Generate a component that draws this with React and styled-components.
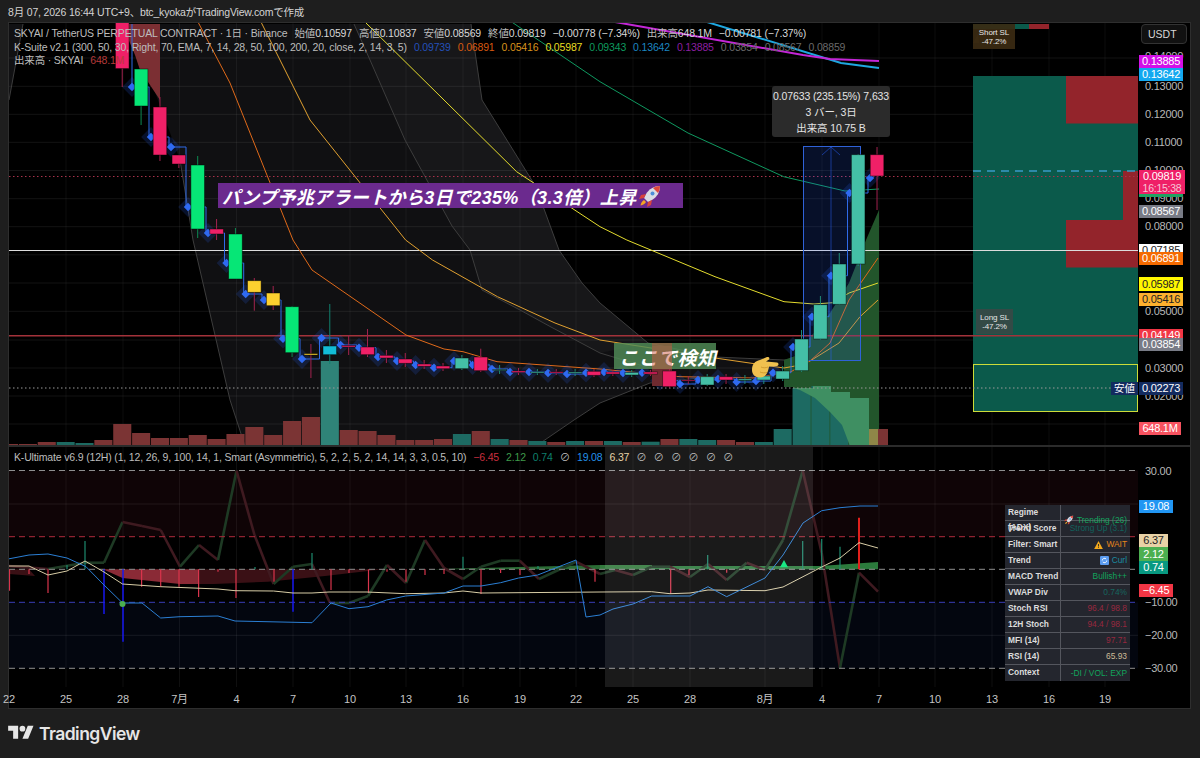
import React from 'react';
import styled, { createGlobalStyle } from 'styled-components';

const FONT = `"Liberation Sans", "Noto Sans CJK JP", sans-serif`;

const GlobalStyle = createGlobalStyle`
  html, body {
    margin: 0;
    padding: 0;
    background: #1e1e1e;
  }
  body {
    font-family: ${FONT};
  }
`;

const Page = styled.div`
  width: 1200px;
  height: 758px;
  overflow: hidden;
  background: #1e1e1e;
  display: flex;
  flex-direction: column;
`;

const Caption = styled.div`
  height: 22px;
  padding-left: 8px;
  display: flex;
  align-items: center;
  color: #d4d4d4;
  font-size: 10.5px;
  letter-spacing: -0.18px;
  white-space: nowrap;
`;

const ChartFrame = styled.div`
  width: 1181px;
  margin-left: 8px;
  border: 1px solid #2e2e2e;
  background: #000;
  display: flex;
  flex-direction: column;
`;

const PaneRow = styled.div`
  display: grid;
  grid-template-columns: 1129px 52px;
  height: ${(p) => p.$h}px;
`;

const Plot = styled.div`
  position: relative;
  overflow: hidden;
  svg {
    display: block;
  }
`;

const PaneDivider = styled.div`
  height: 2px;
  background: #2b2b2b;
`;

const Legend = styled.div`
  position: absolute;
  left: 5px;
  top: ${(p) => p.$top}px;
  display: flex;
  flex-direction: column;
  gap: 2.5px;
  font-size: 10.5px;
  letter-spacing: -0.16px;
  line-height: 11px;
  color: #bdbdbd;
  white-space: nowrap;
`;

const LegendLine = styled.div`
  display: flex;
  gap: ${(p) => p.$gap || 7}px;
`;

const Val = styled.span`
  color: ${(p) => p.$c || '#d8d8d8'};
`;

const Callout = styled.div`
  position: absolute;
  left: ${(p) => p.$x}px;
  top: ${(p) => p.$y}px;
  width: ${(p) => p.$w}px;
  height: ${(p) => p.$h}px;
  background: ${(p) => p.$bg};
  color: #fff;
  font-style: italic;
  font-weight: 700;
  font-size: ${(p) => p.$size}px;
  letter-spacing: ${(p) => p.$ls}px;
  display: flex;
  align-items: center;
  padding-left: ${(p) => p.$pad}px;
  box-sizing: border-box;
  white-space: nowrap;
  svg {
    flex: none;
    margin-left: 1px;
  }
`;

const CalloutTint = styled.div`
  position: absolute;
  left: 643px;
  top: 320px;
  width: 20px;
  height: 26px;
  background: rgba(205, 80, 60, 0.45);
`;

const MeasureTip = styled.div`
  position: absolute;
  left: 763px;
  top: 63px;
  width: 118px;
  height: 51px;
  background: #2b2b2b;
  border-radius: 3px;
  color: #e4e4e4;
  font-size: 10.5px;
  letter-spacing: -0.1px;
  display: flex;
  flex-direction: column;
  align-items: center;
  justify-content: center;
  line-height: 16px;
`;

const ToolTag = styled.div`
  position: absolute;
  left: ${(p) => p.$x}px;
  top: ${(p) => p.$y}px;
  width: ${(p) => p.$w}px;
  height: 25px;
  background: ${(p) => p.$bg};
  color: #e6e6e6;
  font-size: 8px;
  line-height: 9px;
  letter-spacing: -0.1px;
  display: flex;
  flex-direction: column;
  align-items: center;
  justify-content: center;
`;

const LowFlag = styled.div`
  position: absolute;
  right: 0;
  top: 359px;
  width: 27px;
  height: 13px;
  background: #132b5f;
  color: #fff;
  font-size: 10.5px;
  line-height: 13px;
  text-align: center;
`;

const Axis = styled.div`
  position: relative;
  background: #000;
  overflow: hidden;
`;

const AxisText = styled.span`
  position: absolute;
  left: ${(p) => p.$x || 7}px;
  top: ${(p) => p.$y - 7}px;
  line-height: 14px;
  font-size: 11px;
  letter-spacing: -0.25px;
  color: #b8b8b8;
`;

const PriceTag = styled.span`
  position: absolute;
  left: 1px;
  top: ${(p) => p.$y}px;
  width: ${(p) => p.$w || 44}px;
  height: ${(p) => p.$h || 13}px;
  background: ${(p) => p.$bg};
  color: ${(p) => p.$fg || '#fff'};
  font-size: 11px;
  letter-spacing: -0.25px;
  line-height: ${(p) => p.$h || 13}px;
  text-align: center;
  white-space: nowrap;
`;

const TwoLineTag = styled(PriceTag)`
  height: 24px;
  line-height: 12px;
  width: 46px;
  small {
    display: block;
    font-size: 10.5px;
    color: #f6c6d6;
  }
`;

const UnitButton = styled.div`
  position: absolute;
  left: 3px;
  top: 1px;
  width: 46px;
  height: 20px;
  background: #111;
  border: 1px solid #333;
  border-radius: 4px;
  box-sizing: border-box;
  color: #d8d8d8;
  font-size: 10.5px;
  line-height: 18px;
  padding-left: 6px;
`;

const StatTable = styled.div`
  position: absolute;
  left: 996px;
  top: 58px;
  width: 125px;
  background: #24262e;
  display: flex;
  flex-direction: column;
`;

const StatRow = styled.div`
  display: grid;
  grid-template-columns: 56px 1fr;
  height: 16px;
  box-sizing: border-box;
  border-bottom: 1px solid #54565e;
  font-size: 8.4px;
  line-height: 15px;
  &:last-child {
    border-bottom: 0;
  }
`;

const StatLabel = styled.div`
  color: #dcdcdc;
  font-weight: 700;
  padding-left: 3px;
  border-right: 1px solid #54565e;
`;

const StatValue = styled.div`
  color: ${(p) => p.$c};
  display: flex;
  align-items: center;
  justify-content: flex-end;
  gap: 3px;
  padding-right: 3px;
`;

const TimeRow = styled.div`
  position: relative;
  height: 21px;
  background: #000;
`;

const TimeLabel = styled.span`
  position: absolute;
  left: ${(p) => p.$x - 9}px;
  top: 5px;
  transform: translateX(-50%);
  font-size: 11px;
  letter-spacing: -0.2px;
  line-height: 14px;
  color: #c4c4c4;
`;

const Footer = styled.div`
  flex: 1;
  padding: 14px 0 0 8px;
  display: flex;
  align-items: flex-start;
  gap: 5px;
`;

const Brand = styled.span`
  font-family: "Inter", sans-serif;
  font-weight: 600;
  font-size: 17.5px;
  line-height: 22px;
  letter-spacing: -0.55px;
  color: #e6e6e6;
`;

const BAR = 18.87;
const X = (i) => 9 + BAR * i;
const VERTICALS = [66, 123, 179.5, 236.5, 293, 350, 406, 463, 520, 576, 633, 690, 765, 822, 879, 935, 992, 1049, 1105];
const MAIN_LEVELS = [58, 86.3, 114.3, 142.3, 170.5, 198.7, 226.7, 254.8, 283, 311.3, 340, 368, 396, 424];
const SUB_LEVELS = [504, 635.3];

const PINK = '#ef2067';
const LIME = '#06e676';
const TEAL = '#44bfa6';
const GOLD = '#fcd12f';
const AQUA = '#12bcd6';

// [bar, top, bottom, wickTop, wickBottom, colour]
const CANDLES = [
  [6, 10, 68.6, 10, 87, PINK],
  [7, 69, 106, 69, 125, LIME],
  [8, 107, 155, 97, 161, PINK],
  [9, 155, 164, 155, 168, PINK],
  [10, 165, 229, 156, 238, LIME],
  [11, 229, 234, 219, 240, PINK],
  [12, 234, 279, 228, 279, LIME],
  [13, 280.7, 292.3, 278, 310.7, GOLD],
  [14, 293, 305.7, 286, 310, GOLD],
  [15, 306.7, 352.7, 306, 357, LIME],
  [16, 353.6, 355, 344, 378, GOLD],
  [17, 346, 354.7, 304, 364, AQUA],
  [18, 345.5, 347, 335, 355, PINK],
  [19, 347, 354.7, 329, 357, PINK],
  [20, 355.3, 358, 350, 363, PINK],
  [21, 359, 363.3, 353, 367, PINK],
  [22, 364, 366.3, 360, 369, PINK],
  [23, 366, 368.7, 363, 371, PINK],
  [24, 358, 368.7, 355, 370, TEAL],
  [25, 357, 370.7, 348.7, 372, PINK],
  [26, 369.5, 370.5, 365, 374, TEAL],
  [27, 371, 372.5, 368, 375, PINK],
  [28, 371.8, 373, 369, 375, TEAL],
  [29, 371.8, 373, 369, 375, PINK],
  [30, 372, 373.2, 369, 376, TEAL],
  [31, 371.3, 375.3, 369, 377, PINK],
  [32, 372, 374, 370, 376, PINK],
  [33, 372.5, 375, 370, 377, TEAL],
  [34, 372, 374, 370, 376, PINK],
  [35, 371, 386.7, 369, 388, PINK],
  [36, 380, 381, 376, 384, PINK],
  [37, 376.7, 385, 374, 386, TEAL],
  [38, 376.7, 380, 374, 384, PINK],
  [39, 379, 380.5, 375, 384, TEAL],
  [40, 376, 380, 372, 384, TEAL],
  [41, 371, 379, 366, 381, TEAL],
  [42, 339, 370.7, 330, 372, TEAL],
  [43, 304.7, 339, 296, 340, TEAL],
  [44, 264, 304.3, 253, 305, TEAL],
  [45, 154.7, 264, 154, 266, TEAL],
  [46, 154.7, 176, 147, 210, PINK],
];

const DIAMONDS = [
  [132, 87], [151, 137], [171, 147], [188, 207], [208, 233], [226.5, 263], [245.7, 294], [264, 300],
  [283, 338.7], [302, 359], [321.5, 338], [340.6, 345], [359, 347.7], [378, 357], [397, 361], [415.6, 365],
  [434, 367.7], [454, 361], [472.6, 365], [492, 369], [510, 372], [529, 372], [548, 373], [567, 374],
  [586, 372.7], [604, 372], [623, 373], [642, 372.7], [660, 380.7], [680, 384], [698, 380], [718, 379],
  [736.6, 382], [756, 381], [773, 372.7], [793, 347], [812, 316.7], [831, 275.7], [849.5, 193], [870, 178],
];

const steps = DIAMONDS.reduce((acc, [x, y], n) => {
  if (n === 0) return `M132 24V${y}`;
  const prevX = DIAMONDS[n - 1][0];
  return `${acc}H${x - 2}V${y}H${x}`.replace(`H${prevX}H`, 'H');
}, '');

const R = '#7b3434';
const T = '#1d6a62';
const VOLUMES = [
  [444, R], [444, R], [442, R], [442, T], [443, T], [440, R], [424, R], [433, R], [438, R], [438, R], [435, R], [439, R],
  [434, R], [427, R], [435, R], [421, R], [417, R], [361, '#2f8378'], [430, R], [431, R], [435, R], [440, R], [440, R], [439, R],
  [434, T], [431, R], [439, T], [440, R], [441, T], [442, R], [441, T], [441, R], [441, T], [442, R], [441.7, T], [439, R],
  [439, T], [440, T], [440, R], [442, R], [442, T], [429, T], [388, T], [386, T], [392, T], [398, T], [429, R],
];

const ORANGE_MA = '198,22 230,83 293,240 312,270 406,335 444,349 463,351.7 497,361.7 600,369 680,376.7 753,378 791,371.7 810,361 830,343 849,300 878,258';
const GOLD_MA = '261,22 310,120 405.6,240 432.5,260 497.5,296.7 555,323 600,340 715,358 784,368 795,366 810.5,360.7 839,343 860,316.7 878,300';
const YELLOW_MA = '365,22 516.6,171.7 600,226.7 626.8,240 715,276.7 784,301.7 814,304 833,302.7 849,293 878,283';
const GREEN_MA = '511.7,22 600,81.7 688,133 783.7,176.7 845,191 879,189';
const BLUE_MA = '707,22 841,63 879,68';
const PURPLE_MA = '615,22 803,55 830,59 879,61';
const BAND_A = '354,24 370,60 405,140 452,226 470,250 482,290 520,310 551,327 600,353 650,368';
const BAND_B = '471,24 482,100 536,187 559,250 582,283 600,303 648,343 715,357 784,360 845,356 878,343';
const BAND_LOW = '180,160 193,240 230,400 245,446';
const BAND_LOW_R = '536,446 574,420 600,403 650,383 700,378';

const OSC = [
  [8, 566], [48, 569], [85, 562.7], [104, 562.7], [122.5, 522], [142, 526], [160.7, 530], [180, 566.7], [199, 545], [218, 560],
  [236.5, 470.7], [254.5, 535], [273.6, 584], [293, 566.7], [312, 564], [330, 603], [349, 603], [368, 596], [387, 565], [406, 583],
  [425, 540], [444, 568], [463, 579], [481, 566.7], [500.6, 560.7], [519.7, 560.7], [539, 579], [576, 561.7], [600, 574], [615, 570],
  [633, 575], [651.7, 566.7], [670, 566.7], [690, 577], [708, 564], [726.7, 580], [746.7, 562.7], [765, 570], [783, 540], [802.7, 470.7],
  [821.7, 553], [840, 668], [859, 572.7], [878, 591.7],
];

const SIGNAL_BLUE = '8,559 29,555 48,554 67,558 86,566.7 104,585 122.5,603 142,603 160.7,618 180,616.7 218,616 235,621 312,622.7 331,603 349,608.7 368,606.7 386.5,600 405.7,596 444,593 463,586 481,586 500.6,582.7 518.6,578 537.7,575 576,560 586,617 600,615 613,609 633,604 651.7,596 690,596 708,586.7 726.7,596.7 765,578 783,555 803,523 821.7,510.7 840,507.7 860,506 878,506';
const SIGNAL_TAN = '8,566 29,566 48,575 67,571 85,561 104,572 122.5,584 160.7,586.7 218,589 235,590.7 273.6,591 293,593 312,593 329,592 367,592 405.7,593.7 444,593 463,591 481,593 600,592 651.7,591.7 670,593.7 690,593 708,590 765,590.7 783,587 803,576.7 821.7,567 840,558 859,542.7 878,548';

const UP = '#1d8a6e';
const DN = '#d9344c';
const BL = '#1717f0';
// [x, bottom-or-top y, colour]
const HIST = [
  [9.5, 590.7, DN], [29, 574, DN], [48, 593, DN], [67, 565, UP], [85, 541, UP], [104, 614, BL], [123, 641.7, BL], [141.6, 586.7, DN],
  [160.7, 586.7, DN], [179, 586.7, DN], [198.6, 597, DN], [218, 571.7, DN], [236, 598, DN], [255, 567, UP], [274, 581.7, DN], [293, 611.7, BL],
  [312, 553, UP], [331, 590, DN], [349, 573, DN], [368.5, 593, DN], [387, 571.7, DN], [406, 581.7, DN], [425, 575, DN], [444, 574, DN],
  [463, 556.7, UP], [481, 594, DN], [500.6, 573, DN], [520, 575, DN], [538, 566, UP], [595, 581.7, DN], [670.7, 594, DN], [689, 575, DN],
  [707.7, 555, UP], [726.7, 572.7, DN], [802.7, 541, UP], [821.7, 539, UP], [840, 546.7, UP],
];

const STATS = [
  ['Regime (ADX)', 'Trending (26)', '#14a35f', 'rocket'],
  ['Trend Score', 'Strong Up (3.1)', '#12615c'],
  ['Filter: Smart', 'WAIT', '#e8861c', 'warn'],
  ['Trend', 'Curl', '#1b8aa0', 'cycle'],
  ['MACD Trend', 'Bullish++', '#12a35c'],
  ['VWAP Div', '0.74%', '#17655f'],
  ['Stoch RSI', '96.4 / 98.8', '#97283f'],
  ['12H Stoch', '94.4 / 98.1', '#97283f'],
  ['MFI (14)', '97.71', '#97283f'],
  ['RSI (14)', '65.93', '#cdbb98'],
  ['Context', '-DI / VOL: EXP', '#12a35c'],
];

const TIME_TICKS = [
  [9, '22'], [66, '25'], [123, '28'], [179.5, '7月'], [236.5, '4'], [293, '7'], [350, '10'], [406, '13'], [463, '16'], [520, '19'],
  [576, '22'], [633, '25'], [690, '28'], [765, '8月'], [822, '4'], [879, '7'], [935, '10'], [992, '13'], [1049, '16'], [1105, '19'],
];

const Rocket = ({ size }) => (
  <svg width={size} height={size} viewBox="0 0 24 24">
    <path d="M22 2c-6 0-11 3-14 8l-2 4 4 4 4-2c5-3 8-8 8-14z" fill="#d9dde4" />
    <path d="M22 2c-3 0-5 .8-7 2l5 5c1.200-2 2-4 2-7z" fill="#e0483e" />
    <circle cx="14.500" cy="9.500" r="2" fill="#4d8fd8" />
    <path d="M8 10l-5 1-2 4 5-1zM14 16l-1 5-4 2 1-5z" fill="#d8433c" />
    <path d="M6 16c-2 1-3 3-3.500 5.500C5 21 7 20 8 18z" fill="#f5a623" />
  </svg>
);

const WarnIcon = () => (
  <svg width="9" height="8" viewBox="0 0 12 11">
    <path d="M6 0l6 11H0z" fill="#f2a81d" />
    <path d="M5.400 4h1.200v3.500H5.400zM5.400 8.200h1.200v1.200H5.400z" fill="#222" />
  </svg>
);

const CycleIcon = () => (
  <svg width="9" height="9" viewBox="0 0 12 12">
    <rect width="12" height="12" rx="1.500" fill="#5b9cf0" />
    <path d="M3 6a3 3 0 0 1 5.200-2M9 6a3 3 0 0 1-5.200 2" fill="none" stroke="#fff" strokeWidth="1.200" />
  </svg>
);

const TvLogo = () => (
  <svg width="26" height="20" viewBox="0 0 36 28" fill="#e6e6e6">
    <path d="M14 22H7V11H0V4h14v18zM28 22h-8l7.500-18h8L28 22z" />
    <circle cx="20" cy="8" r="4" />
  </svg>
);

const MainChart = () => (
  <svg width="1129" height="422" viewBox="9 23 1129 422">
    <polygon points="9,24 23,24 9,100" fill="#111113" />
    <polygon points={`130,24 354,24 471,24 482,100 536,187 559,250 582,283 600,303 648,343 715,357 784,360 780,378 700,378 650,383 600,403 574,420 536,446 245,446 230,400 193,240 180,160`} fill="#101012" />
    <polygon points={`354,24 471,24 482,100 536,187 559,250 582,283 600,303 648,343 600,353 551,327 520,310 482,290 470,250 452,226 405,140 370,60`} fill="#171719" />
    {MAIN_LEVELS.map((y) => (
      <line key={y} x1="9" x2="1138" y1={y} y2={y} stroke="#fff" strokeOpacity="0.075" />
    ))}
    {VERTICALS.map((x) => (
      <line key={x} x1={x} x2={x} y1="23" y2="446" stroke="#fff" strokeOpacity="0.05" />
    ))}
    <polyline points="9,100 23,24" fill="none" stroke="#3d3d3d" />
    <polyline points={BAND_A} fill="none" stroke="#3d3d3d" />
    <polyline points={BAND_B} fill="none" stroke="#3d3d3d" />
    <polyline points={BAND_LOW} fill="none" stroke="#3d3d3d" />
    <polyline points={BAND_LOW_R} fill="none" stroke="#3d3d3d" />

    <polygon points="784,360 795,356 830,313 849,283 866,240 879,210 879,446 793,446 793,387 784,387" fill="#22552b" />
    <polygon points="122,24 160,24 160,100 140,70 135,55" fill="#7b2f33" />

    {VOLUMES.map(([top, color], i) => (
      <rect key={i} x={X(i) - 9} y={top} width={BAR - 0.8} height={446 - top} fill={color} />
    ))}
    <polygon points="793,388 813,388 813,386 831,386 831,392 850,392 850,398 869,398 869,429 879,429 879,446 850,446 842,425 830,412 815,398 800,390" fill="#3f8f62" />
    <rect x="869" y="429" width="9" height="17" fill="#8f8748" />
    <rect x="878" y="429" width="10" height="17" fill="#7b3434" />

    <rect x="973" y="76" width="165" height="336" fill="#0b5a4b" />
    <rect x="1066" y="76" width="72" height="47.500" fill="#93242b" />
    <rect x="1066" y="220" width="72" height="47.500" fill="#93242b" />
    <rect x="1123" y="171" width="15" height="49" fill="#93242b" />
    <rect x="973.500" y="364.500" width="164" height="47" fill="none" stroke="#cddc39" />
    <rect x="973" y="24" width="56" height="5" fill="#0b5a4b" />
    <rect x="1029" y="24" width="20" height="5" fill="#93242b" />
    <line x1="973" x2="1138" y1="171" y2="171" stroke="#3a9bc8" strokeWidth="1.500" strokeDasharray="8 6" />

    <line x1="9" x2="1138" y1="176.500" y2="176.500" stroke="#a8324a" strokeDasharray="1.500 2.500" />
    <line x1="9" x2="1138" y1="250.500" y2="250.500" stroke="#dcdcdc" strokeWidth="1.200" />
    <line x1="9" x2="1138" y1="335.700" y2="335.700" stroke="#a3323a" strokeWidth="1.500" />
    <line x1="9" x2="1138" y1="388" y2="388" stroke="#9a9a9a" strokeDasharray="1.500 2.500" />

    <polyline points={GREEN_MA} fill="none" stroke="#0f9960" />
    <polyline points={YELLOW_MA} fill="none" stroke="#e4dc2e" />
    <polyline points={GOLD_MA} fill="none" stroke="#e0a030" />
    <polyline points={ORANGE_MA} fill="none" stroke="#e06a1a" />
    <polyline points={BLUE_MA} fill="none" stroke="#1ea7e0" strokeWidth="2" />
    <polyline points={PURPLE_MA} fill="none" stroke="#c326d6" strokeWidth="2" />

    <rect x="803.500" y="146.500" width="57" height="214" fill="#2962ff" fillOpacity="0.16" stroke="#2f62d8" />
    <line x1="831" x2="831" y1="147" y2="361" stroke="#2962ff" strokeOpacity="0.5" />
    <polyline points="822,155 831,147 840,155" fill="none" stroke="#2962ff" strokeOpacity="0.5" />

    {DIAMONDS.map(([x, y]) => (
      <rect key={x} x={x - 7} y={y - 7} width="14" height="14" transform={`rotate(45 ${x} ${y})`} fill="#2962ff" fillOpacity="0.17" />
    ))}
    <path d={steps} fill="none" stroke="#2f6ae8" />
    {DIAMONDS.map(([x, y]) => (
      <rect key={x} x={x - 3} y={y - 3} width="6" height="6" transform={`rotate(45 ${x} ${y})`} fill="#2f6af2" />
    ))}

    <rect x="652" y="346" width="20" height="40" fill="#6e2a30" />
    {CANDLES.map(([i, top, bottom, wt, wb, color]) => (
      <g key={i}>
        <line
          x1={X(i)}
          x2={X(i)}
          y1={wt}
          y2={wb}
          stroke={color === PINK || color === GOLD ? '#a3234f' : color === AQUA ? '#12806f' : color === LIME ? '#0d8a52' : '#1f8c78'}
        />
        <rect x={X(i) - 6.8} y={top} width="13.600" height={bottom - top} fill={color} stroke="#000" strokeOpacity="0.55" strokeWidth="0.8" />
      </g>
    ))}

    <path d="M752 370c0-6 3-9 8-10l7-3c2-.5 3 1 2 2.500l-3 2 11 1c2 .5 2 3 0 3.500l-8 .5c-1 6-3 11-9 11-5 0-8-3-8-7.500z" fill="#f0c14f" />
    <path d="M761 367c2 1 5 1 7 0M760 372c2 1 5 1 7 .5" fill="none" stroke="#c8932b" strokeWidth="0.8" />

    <polygon points="973,43 978,34 979,43" fill="#3b2a12" />
  </svg>
);

const SubChart = () => (
  <svg width="1129" height="240" viewBox="9 447 1129 240">
    <rect x="9" y="470.500" width="1129" height="66" fill="#0f0406" />
    <rect x="9" y="602.300" width="1129" height="66" fill="#03060f" />
    {[...SUB_LEVELS].map((y) => (
      <line key={y} x1="9" x2="1138" y1={y} y2={y} stroke="#fff" strokeOpacity="0.08" />
    ))}
    {VERTICALS.map((x) => (
      <line key={x} x1={x} x2={x} y1="447" y2="687" stroke="#fff" strokeOpacity="0.06" />
    ))}

    <polygon points="103,569.300 122.500,578 180,584 199,584 199,569.300" fill="#8a2a36" />
    <polygon points="199,569.300 199,584 214,584 268,581.700 325,576 383,569.300" fill="#3a1015" />
    <polygon points="9,574 35,576 29,569.300 9,569.300" fill="#3a1015" />
    <polygon points="428,569.300 600,565 652,565 652,569.300" fill="#2a6b34" />
    <polygon points="600,565 652,565 652,569.300 600,569.300" fill="#337a3d" />
    <polygon points="652,566 820,566 878,562 878,569.300 652,569.300" fill="#2b7a3c" />

    {OSC.slice(1).map(([x, y], n) => (
      <line
        key={x}
        x1={OSC[n][0]}
        y1={OSC[n][1]}
        x2={x}
        y2={y}
        stroke={y <= OSC[n][1] ? '#1e3a24' : '#3f1a20'}
        strokeWidth="2.600"
      />
    ))}

    <line x1="9" x2="1138" y1="470.500" y2="470.500" stroke="#8f8f8f" strokeDasharray="6 4" />
    <line x1="9" x2="1138" y1="536.700" y2="536.700" stroke="#b12a3c" strokeDasharray="6 4" />
    <line x1="9" x2="1138" y1="569.300" y2="569.300" stroke="#8f8f8f" strokeDasharray="6 4" />
    <line x1="9" x2="1138" y1="602.300" y2="602.300" stroke="#3a3fb8" strokeDasharray="6 4" />
    <line x1="9" x2="1138" y1="668.300" y2="668.300" stroke="#8f8f8f" strokeDasharray="6 4" />

    {HIST.map(([x, y, color]) => (
      <line key={x} x1={x} x2={x} y1="569.300" y2={y} stroke={color} strokeWidth={color === BL ? 1.500 : 1.200} />
    ))}
    <line x1="859" x2="859" y1="569.300" y2="517.700" stroke="#e2201c" strokeWidth="2" />

    <polyline points={SIGNAL_TAN} fill="none" stroke="#d8cda6" />
    <polyline points={SIGNAL_BLUE} fill="none" stroke="#2b7fd4" />
    <circle cx="122.500" cy="604" r="3" fill="#4caf50" />
    <polygon points="784,560 788,567.300 780,567.300" fill="#00e676" />

    <rect x="605" y="447" width="208" height="241" fill="#fff" fillOpacity="0.1" />
  </svg>
);

const App = () => (
  <Page>
    <GlobalStyle />
    <Caption>8月 07, 2026 16:44 UTC+9、btc_kyokaがTradingView.comで作成</Caption>
    <ChartFrame>
      <PaneRow $h={422}>
        <Plot>
          <MainChart />
          <Legend $top={5}>
            <LegendLine>
              <span>SKYAI / TetherUS PERPETUAL CONTRACT · 1日 · Binance</span>
              <span>始値<Val>0.10597</Val></span>
              <span>高値<Val>0.10837</Val></span>
              <span>安値<Val>0.08569</Val></span>
              <span>終値<Val>0.09819</Val></span>
              <Val>−0.00778 (−7.34%)</Val>
              <span>出来高<Val>648.1M</Val></span>
              <Val>−0.00781 (−7.37%)</Val>
            </LegendLine>
            <LegendLine>
              <span>K-Suite v2.1 (300, 50, 30, Right, 70, EMA, 7, 14, 28, 50, 100, 200, 20, close, 2, 14, 3, 5)</span>
              <Val $c="#2450b8">0.09739</Val>
              <Val $c="#d85a10">0.06891</Val>
              <Val $c="#d8921c">0.05416</Val>
              <Val $c="#e8dc22">0.05987</Val>
              <Val $c="#0e9a5e">0.09343</Val>
              <Val $c="#1c86c0">0.13642</Val>
              <Val $c="#8c1fa0">0.13885</Val>
              <Val $c="#6a6a6a">0.03854</Val>
              <Val $c="#6a6a6a">0.08567</Val>
              <Val $c="#6a6a6a">0.08859</Val>
            </LegendLine>
            <LegendLine>
              <span>出来高 · SKYAI</span>
              <Val $c="#b53a3a">648.1M</Val>
            </LegendLine>
          </Legend>
          <Callout $x={209} $y={160} $w={465} $h={25} $bg="#6b2a8e" $size={18} $ls={0.35} $pad={4}>
            パンプ予兆アラートから3日で235%（3.3倍）上昇
            <Rocket size={24} />
          </Callout>
          <Callout $x={605} $y={320} $w={102} $h={26} $bg="rgba(82,142,88,0.82)" $size={19} $ls={0.5} $pad={5}>
            ここで検知
          </Callout>
          <CalloutTint />
          <MeasureTip>
            <span>0.07633 (235.15%) 7,633</span>
            <span>3 バー, 3日</span>
            <span>出来高 10.75 B</span>
          </MeasureTip>
          <ToolTag $x={964} $y={1} $w={42} $bg="rgba(59,42,18,0.92)">
            <span>Short SL</span>
            <span>-47.2%</span>
          </ToolTag>
          <ToolTag $x={967} $y={286} $w={37} $bg="#334a46">
            <span>Long SL</span>
            <span>-47.2%</span>
          </ToolTag>
          <LowFlag>安値</LowFlag>
        </Plot>
        <Axis>
          <UnitButton>USDT</UnitButton>
          <AxisText $y={33}>0.14000</AxisText>
          <PriceTag $y={45} $bg="#12a8f0">0.13642</PriceTag>
          <PriceTag $y={32} $bg="#d40fe8">0.13885</PriceTag>
          <AxisText $y={63}>0.13000</AxisText>
          <AxisText $y={91}>0.12000</AxisText>
          <AxisText $y={119}>0.11000</AxisText>
          <AxisText $y={147}>0.10000</AxisText>
          <AxisText $y={175}>0.09000</AxisText>
          <AxisText $y={203}>0.08000</AxisText>
          <PriceTag $y={171} $h={3} $bg="#1ea362"></PriceTag>
          <TwoLineTag $y={147} $bg="#ef2067">
            0.09819
            <small>16:15:38</small>
          </TwoLineTag>
          <PriceTag $y={182} $bg="#787b86">0.08567</PriceTag>
          <PriceTag $y={221} $bg="#fff" $fg="#222">0.07185</PriceTag>
          <PriceTag $y={229} $bg="#f56a00">0.06891</PriceTag>
          <PriceTag $y={254} $h={14} $bg="#fff700" $fg="#222">0.05987</PriceTag>
          <PriceTag $y={270} $bg="#fdb02e" $fg="#222">0.05416</PriceTag>
          <AxisText $y={288}>0.05000</AxisText>
          <PriceTag $y={306} $bg="#f23645">0.04149</PriceTag>
          <PriceTag $y={315} $bg="#787b86">0.03854</PriceTag>
          <AxisText $y={345}>0.03000</AxisText>
          <AxisText $y={373}>0.02000</AxisText>
          <PriceTag $y={359} $bg="#132b5f">0.02273</PriceTag>
          <PriceTag $y={399} $w={42} $bg="#f7525f">648.1M</PriceTag>
        </Axis>
      </PaneRow>
      <PaneDivider />
      <PaneRow $h={240}>
        <Plot>
          <SubChart />
          <Legend $top={5}>
            <LegendLine>
              <span>K-Ultimate v6.9 (12H) (1, 12, 26, 9, 100, 14, 1, Smart (Asymmetric), 5, 2, 2, 5, 2, 14, 14, 3, 3, 0.5, 10)</span>
              <Val $c="#c92f3f">−6.45</Val>
              <Val $c="#3f9a4a">2.12</Val>
              <Val $c="#0e7f6c">0.74</Val>
              <Val $c="#bdbdbd">⊘</Val>
              <Val $c="#2390e8">19.08</Val>
              <Val $c="#e6d2a8">6.37</Val>
              <Val $c="#bdbdbd">⊘</Val>
              <Val $c="#bdbdbd">⊘</Val>
              <Val $c="#bdbdbd">⊘</Val>
              <Val $c="#bdbdbd">⊘</Val>
              <Val $c="#bdbdbd">⊘</Val>
              <Val $c="#bdbdbd">⊘</Val>
            </LegendLine>
          </Legend>
          <StatTable>
            {STATS.map(([label, value, color, icon]) => (
              <StatRow key={label}>
                <StatLabel>{label}</StatLabel>
                <StatValue $c={color}>
                  {icon === 'rocket' && <Rocket size={10} />}
                  {icon === 'warn' && <WarnIcon />}
                  {icon === 'cycle' && <CycleIcon />}
                  {value}
                </StatValue>
              </StatRow>
            ))}
          </StatTable>
        </Plot>
        <Axis>
          <AxisText $y={24}>30.00</AxisText>
          <PriceTag $y={53} $w={34} $bg="#2196f3">19.08</PriceTag>
          <PriceTag $y={87} $w={29} $bg="#e8d2a6" $fg="#222">6.37</PriceTag>
          <PriceTag $y={100} $w={29} $h={14} $bg="#4caf50">2.12</PriceTag>
          <PriceTag $y={114} $w={29} $bg="#089981">0.74</PriceTag>
          <PriceTag $y={137} $w={34} $bg="#f23645">−6.45</PriceTag>
          <AxisText $y={155}>−10.00</AxisText>
          <AxisText $y={188}>−20.00</AxisText>
          <AxisText $y={221}>−30.00</AxisText>
        </Axis>
      </PaneRow>
      <TimeRow>
        {TIME_TICKS.map(([x, label]) => (
          <TimeLabel key={x} $x={x}>{label}</TimeLabel>
        ))}
      </TimeRow>
    </ChartFrame>
    <Footer>
      <TvLogo />
      <Brand>TradingView</Brand>
    </Footer>
  </Page>
);

export default App;
